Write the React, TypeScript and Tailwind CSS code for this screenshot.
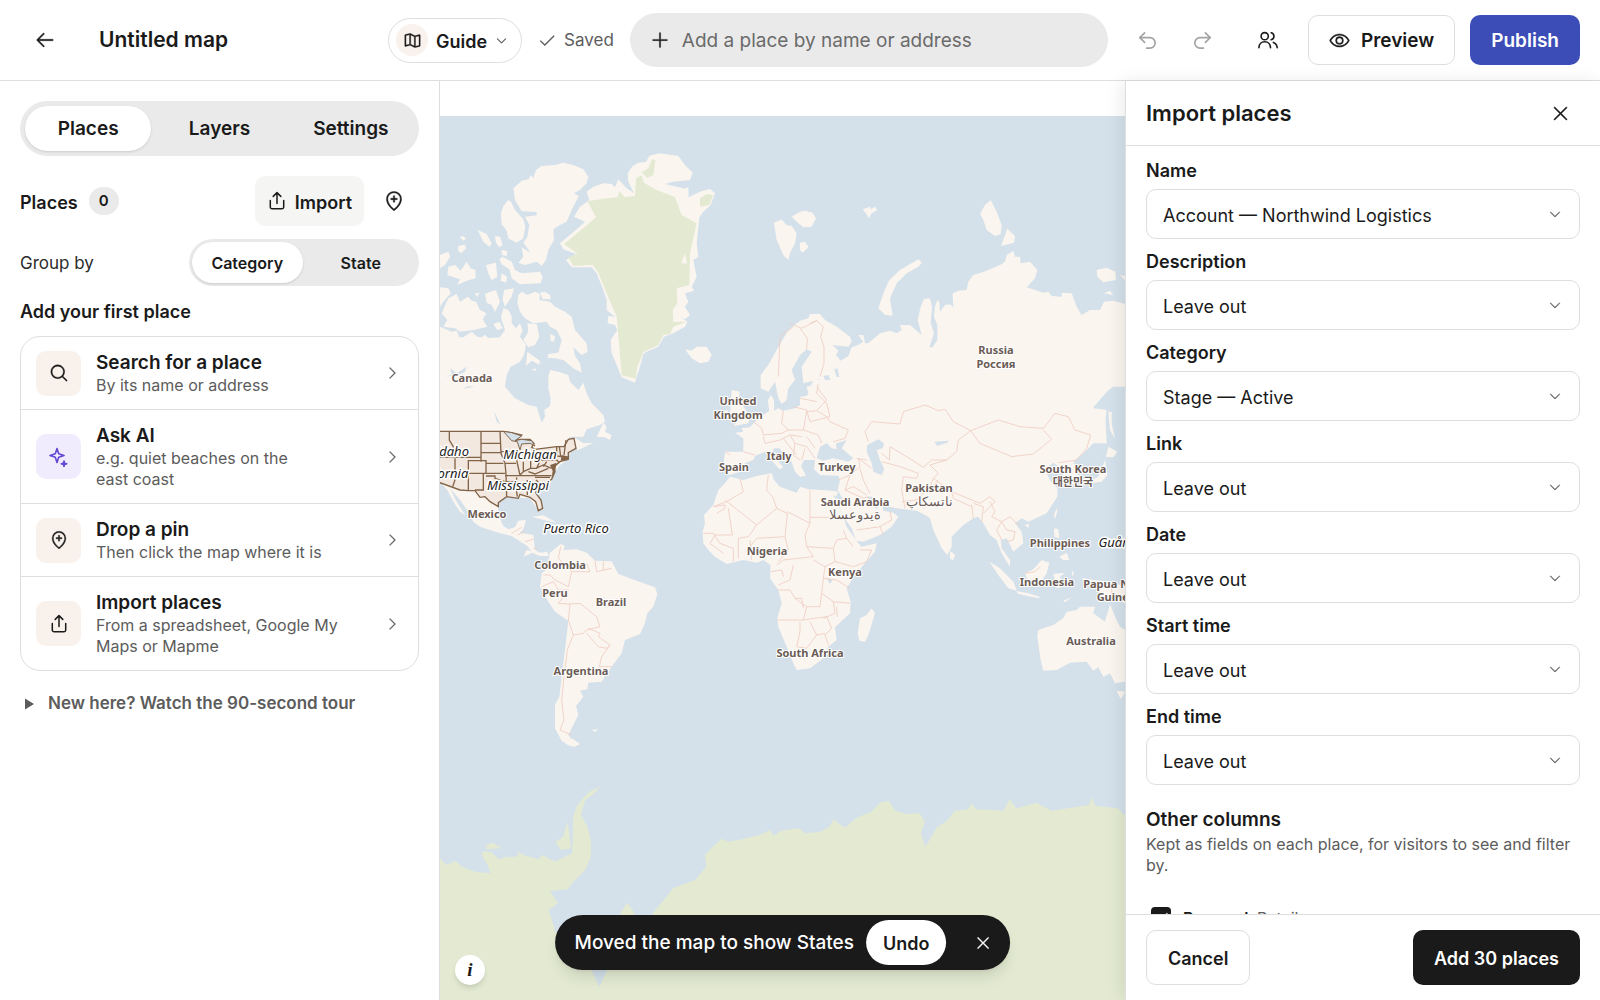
import { useState, type ReactNode } from "react";
import clsx from "clsx";
import { Redo2, Undo2 } from "lucide-react";
import { IconContext } from "react-icons";
import {
  PiArrowLeft,
  PiCaretDown,
  PiCaretRight,
  PiCheck,
  PiEye,
  PiMagnifyingGlass,
  PiMapPinPlus,
  PiMapTrifold,
  PiPlus,
  PiX,
} from "react-icons/pi";

const fields = [
  { name: "Name", value: "Account — Northwind Logistics" },
  { name: "Description", value: "Leave out" },
  { name: "Category", value: "Stage — Active" },
  { name: "Link", value: "Leave out" },
  { name: "Date", value: "Leave out" },
  { name: "Start time", value: "Leave out" },
  { name: "End time", value: "Leave out" },
];

const countries = [
  { x: 472, y: 382, text: "Canada" },
  { x: 996, y: 354, text: "Russia" },
  { x: 996, y: 368, text: "Россия" },
  { x: 738, y: 405, text: "United" },
  { x: 738, y: 419, text: "Kingdom" },
  { x: 779, y: 460, text: "Italy" },
  { x: 734, y: 471, text: "Spain" },
  { x: 837, y: 471, text: "Turkey" },
  { x: 929, y: 492, text: "Pakistan" },
  { x: 855, y: 506, text: "Saudi Arabia" },
  { x: 1073, y: 473, text: "South Korea" },
  { x: 1073, y: 486, text: "대한민국" },
  { x: 1060, y: 547, text: "Philippines" },
  { x: 1047, y: 586, text: "Indonesia" },
  { x: 1114, y: 588, text: "Papua New" },
  { x: 1116, y: 601, text: "Guinea" },
  { x: 1091, y: 645, text: "Australia" },
  { x: 845, y: 576, text: "Kenya" },
  { x: 767, y: 555, text: "Nigeria" },
  { x: 810, y: 657, text: "South Africa" },
  { x: 560, y: 569, text: "Colombia" },
  { x: 555, y: 597, text: "Peru" },
  { x: 611, y: 606, text: "Brazil" },
  { x: 581, y: 675, text: "Argentina" },
  { x: 487, y: 518, text: "Mexico" },
];

const states = [
  { x: 452, y: 456, text: "Idaho" },
  { x: 440, y: 478, text: "California" },
  { x: 530, y: 459, text: "Michigan" },
  { x: 518, y: 490, text: "Mississippi" },
  { x: 576, y: 533, text: "Puerto Rico" },
  { x: 1116, y: 547, text: "Guåm" },
];

function WorldMap() {
  return (
    <svg
      viewBox="440 81 685 919"
      preserveAspectRatio="xMidYMid slice"
      className="absolute inset-0 h-full w-full"
      role="img"
      aria-label="World map"
    >
      <rect x="-400" y="116" width="2400" height="1200" fill="#d4e1ea" />

      {/* Arctic Canada and Greenland */}
      <g transform="translate(440 110) scale(0.33333)" fill="#fbf5f0">
        <path d="M220 235L245 212 266 208 272 195 280 205 288 180 304 168 345 165 370 158 400 165 430 178 445 200 440 220 420 240 402 250 416 258 395 300 380 335 360 345 340 358 342 390 325 420 318 450 305 468 290 455 255 465 235 458 250 440 245 412 272 428 250 398 262 380 268 345 255 320 290 316 290 306 245 304 225 270Z" />
        <path d="M205 270L213 275 225 300 250 328 256 350 250 385 230 398 205 385 200 362 185 342 183 310 190 288Z" />
        <path d="M113 360L140 372 155 400 148 411 130 395Z M165 378L180 380 188 405 178 412 168 398Z M60 382L68 378 78 385 70 392Z M55 408L75 404 78 415 64 430 54 422Z M0 435L25 425 30 440 15 465 0 475Z" />
        <path d="M25 470L45 465 62 482 80 455 92 475 106 480 107 505 80 512 52 525 60 508 22 495Z M138 465L168 458 172 500 155 510 145 490Z M185 490L201 500 198 518 182 512Z M185 420L202 424 200 438 186 434Z" />
        <path d="M178 447L188 441 215 455 225 480 245 490 300 485 308 500 302 520 240 523 215 505 208 478 185 463Z" />
        <path d="M0 532L25 535 32 550 10 575 0 590Z M5 610L25 565 50 552 60 575 84 560 95 572 108 575 120 600 140 610 128 628 142 650 100 660 60 665 45 655 10 650 22 630Z M105 550L118 548 112 562Z" />
        <path d="M135 552L150 545 168 541 180 575 165 605 155 585 140 578Z M192 540L222 535 215 560 195 590 188 570Z M300 548L315 545 330 555 332 568 308 568Z" />
        <path d="M235 555L245 545 262 555 285 545 300 552 298 570 330 575 345 590 375 605 395 620 405 660 440 700 443 725 425 735 400 712 405 738 420 760 425 788 400 775 370 750 345 745 322 743 325 732 355 728 365 690 350 660 330 650 320 635 280 640 255 625 240 605 232 580Z" />
        <path d="M262 640L290 642 298 680 285 705 265 712 250 690 265 665Z M262 725L275 735 300 752 298 764 275 752 258 768Z M330 673L345 678 342 695 332 692Z M160 642L178 635 188 655 172 660Z M275 778L290 775 285 784Z" />
        <path d="M0 650L35 665 50 662 58 682 70 682 95 665 112 680 125 682 135 674 145 684 180 682 195 660 183 622 190 595 205 600 215 618 215 640 228 655 240 640 248 662 240 680 258 705 252 735 240 755 212 770 200 795 195 830 225 865 265 885 290 890 305 938 315 920 313 900 330 888 332 865 325 835 325 800 330 780 355 785 385 795 390 815 415 840 430 818 440 850 455 880 490 915 495 935 480 945 440 958 430 980 0 980Z" />
        <path d="M402 320L420 290 448 270 440 245 460 230 490 220 515 222 525 232 535 208 560 235 582 250 565 215 563 190 578 168 595 158 618 156 628 137 660 130 715 138 735 165 758 188 750 210 700 215 675 222 735 236 745 230 746 262 780 245 810 237 825 250 812 285 790 305 778 322 770 400 775 440 760 450 770 500 755 530 763 542 735 550 745 575 735 590 750 615 735 628 720 620 742 635 735 650 700 670 672 680 655 710 620 725 610 732 600 770 590 800 585 818 545 802 530 765 515 730 512 690 532 660 525 645 503 640 505 618 525 620 500 600 500 570 490 540 470 490 455 472 395 472 378 450 408 432 370 418 360 400 410 358 435 335Z" />
        <path
          d="M442 274L500 265 533 262 538 243 555 262 585 257 588 205 605 196 612 218 650 240 705 262 725 315 770 340 750 430 748 525 710 535 712 580 698 600 700 636 740 635 700 650 690 672 670 675 655 705 610 726 592 770 587 806 545 796 537 700 530 620 500 550 475 488 458 465 400 468 385 442 412 431 372 402 435 350 468 322Z M605 187L625 175 636 148 646 150 640 195 622 204Z M780 265L800 252 820 255 808 285 780 290Z"
          fill="#e3ead1"
        />
        <path d="M724 458L735 430 741 462Z M735 718L755 722 770 710 800 710 815 735 805 755 780 760 755 745Z" />
        <path d="M1002 338L1025 328 1040 345 1055 348 1070 370 1065 400 1050 430 1045 450 1030 435 1010 390Z M1055 320L1080 305 1095 302 1118 308 1128 325 1115 350 1090 352 1075 340Z" />
        <path
          d="M15 800L35 795 32 775 50 790 80 770 75 785 55 795Z M68 838L85 828 103 830 85 833Z M162 903L182 945 170 935Z"
          fill="#d4e1ea"
        />
      </g>

      {/* Northern Eurasia */}
      <g transform="translate(800 110) scale(0.33333)" fill="#fbf5f0">
        <path d="M-118 795L-95 765 -70 720 -35 660 0 632 25 625 30 612 60 612 75 630 110 650 150 680 155 695 145 710 97 705 115 722 108 735 122 752 145 738 155 712 175 704 190 695 175 675 190 675 195 700 205 700 240 670 270 662 290 670 305 660 300 645 330 645 365 675 353 630 362 590 372 567 390 565 396 590 392 640 402 670 388 712 398 712 412 690 412 645 402 620 405 590 412 570 418 575 420 605 435 585 450 583 460 592 458 550 475 542 500 540 505 515 520 495 550 486 600 465 615 455 620 435 640 423 645 440 660 440 662 460 690 455 712 480 705 505 680 532 705 540 730 548 745 545 755 558 785 560 785 548 815 550 830 590 845 615 870 600 900 600 912 575 940 572 976 582 976 830 940 830 920 845 878 895 915 905 920 1000 0 1000 0 860 20 860 25 850 20 830 55 822 60 808 10 820 5 770 35 725 20 718 0 735 -25 780 -15 810 -35 835 -40 870 -55 882 -65 865 -75 815 -95 845 -118 835Z" />
        <path d="M572 270L590 305 605 345 602 372 585 378 560 360 550 330 540 312 555 285Z M622 356L645 378 642 398 603 408Z M355 448L366 458 355 470 320 490 290 520 270 565 278 617 255 615 235 595 252 545 268 510 300 480Z" />
        <path d="M890 480L920 473 946 485 948 510 910 517 892 500Z M960 495L976 498 976 512Z M912 550L930 542 940 556Z M188 298L210 290 212 298 225 290 232 300 215 310 207 325 198 310Z M0 398L15 395 25 412 8 428 0 420Z" />
        <path d="M635 933L660 912 678 882 681 895 665 922Z M70 798L85 795 92 812 80 820Z M103 778L112 775 118 800 110 802Z" fill="#d4e1ea" />
      </g>

      {/* Southern Eurasia, Africa and Oceania */}
      <g transform="translate(700 380) scale(0.33333)" fill="#fbf5f0">
        <path d="M340 0L330 25 325 45 305 52 300 75 285 85 250 92 235 85 222 92 222 60 212 45 203 62 208 92 190 105 165 125 150 142 125 145 130 155 105 158 130 175 130 215 75 215 72 240 75 275 90 285 120 275 135 250 160 240 165 228 195 215 210 235 238 268 250 262 215 222 222 205 238 205 255 225 275 245 285 275 300 290 318 287 303 258 312 240 345 240 342 268 360 285 415 287 420 300 413 330 430 360 408 355 430 410 455 445 468 482 490 485 540 465 575 440 595 410 580 398 550 392 545 372 528 386 500 350 515 350 545 375 590 385 650 392 670 402 690 415 700 450 725 505 742 525 755 500 755 470 790 435 820 415 835 410 850 430 870 465 890 480 905 520 930 560 930 540 905 505 902 480 920 475 940 515 970 490 965 455 945 430 965 415 985 425 1040 400 1072 350 1072 325 1050 300 1035 270 1060 248 1080 262 1095 305 1128 315 1138 290 1120 245 1150 220 1190 180 1215 130 1220 90 1180 85 1180 0Z" />
        <path d="M90 290L130 300 170 288 215 280 222 300 240 320 290 338 300 320 325 328 400 332 415 335 408 350 400 345 428 405 440 440 475 490 485 500 530 490 525 515 490 555 455 600 440 625 452 665 450 700 405 742 410 780 385 800 370 835 330 865 290 870 280 850 260 800 235 740 232 715 245 670 235 630 210 595 212 555 190 540 170 548 130 540 80 552 45 530 25 510 10 490 8 455 15 430 12 405 40 375 55 330 75 310Z" />
        <path d="M515 685L525 700 505 765 495 785 478 782 473 760 480 715 500 705Z M750 512L765 525 760 540 750 536Z M868 545L900 565 940 605 950 632 925 625 895 585Z M948 633L985 640 1020 650 1015 655 955 642Z M975 580L1000 568 1025 540 1048 548 1040 580 1020 610 985 605Z M1060 582L1095 578 1080 590 1090 620 1070 625 1065 600Z M1115 570L1122 580 1118 590Z M1090 662L1115 652 1095 667Z" />
        <path d="M1062 405L1070 385 1072 395 1065 417Z M973 435L988 432 985 443Z M1062 445L1075 448 1078 475 1063 470Z M1078 530L1100 518 1108 540 1090 540Z M1225 95L1235 95 1235 130 1245 178 1230 150Z M1225 200L1252 215 1240 232 1218 230Z M1215 240L1222 285 1205 305 1150 312 1195 290Z M1145 593L1180 600 1230 605 1276 620 1276 670 1250 660 1210 650 1190 620 1155 605Z" />
        <path d="M1012 770L1015 750 1060 735 1090 715 1100 695 1130 690 1140 680 1185 680 1180 700 1215 725 1230 672 1245 710 1260 740 1276 750 1276 905 1245 910 1230 880 1210 890 1195 862 1180 872 1160 845 1110 848 1070 870 1030 872 1022 840Z M1250 932L1276 935 1262 957Z M95 30L120 35 115 55 150 110 145 130 100 138 110 125 90 110Z M60 95L85 90 80 115 62 118Z" />
        <path
          d="M350 235L360 200 380 190 395 205 410 208 408 190 440 180 425 205 460 235 445 245 400 235 370 242Z M502 195L535 178 552 190 548 205 530 210 540 240 553 268 545 285 520 275 515 250 500 215Z M703 185L745 182 745 187 712 198Z M380 595L398 600 390 612Z"
          fill="#d4e1ea"
        />
        <g fill="none" stroke="#eecdc0" strokeWidth="2.5">
          <path d="M505 185L495 155 515 125 600 132 610 95 675 75 715 92 735 88 760 125 812 152 895 120 960 140 1030 145 1065 100 1105 110 1125 150 1172 165 1160 205 1130 240 1075 248" />
          <path d="M812 152L840 190 935 230 1000 222 1055 178 1030 150 M812 152L775 180 770 215 740 240 695 240 670 262 620 230 570 200 568 240 545 220 M740 240L690 255 715 280 700 295 755 335 840 370 870 350 885 365 850 400 M545 245L600 260 655 280 650 295 610 290 605 330 615 385 M605 365L650 360 690 320 700 295" />
          <path d="M690 330L715 300 M755 335L760 355 815 380 M820 370L850 380 845 425 M815 375L820 415 M870 365L885 395 875 410 905 425 890 450 905 480 M905 425L930 410 960 440 M905 425L920 450 945 455 940 480 920 485 M975 580L1005 575 1020 560 M1235 605V650" />
          <path d="M450 285L480 260 475 235 515 265 M415 300L450 285 435 330 460 320 500 345 M480 265L490 300 510 340 M435 330L490 355 505 350 M470 450L540 440 575 420 570 395 M540 440L550 465 M470 235L500 240" />
          <path d="M250 92L245 130 265 150 310 150 320 95 M320 95L350 92 380 60 350 20 M350 92L380 110 390 125 445 150 435 175 400 185 M310 150L355 165 365 190 M265 150L245 160 190 165 185 145 160 125 M190 170L195 190 240 180 270 165 305 170 M270 165L285 190 320 200 345 235 M285 190L280 225 300 240 M320 170L345 205 M300 55L350 65 M250 175L265 195 290 225 M75 215L90 225M130 215L165 225M315 205L305 240" />
          <path d="M120 295L130 335 80 365 40 380 M75 360L170 435 145 470 115 475 M85 385L97 465 45 465 M205 285L200 330 218 350 230 385 170 435 M230 385L262 400 255 470 170 475 150 500 M330 330V430 L262 395 M330 412H425 M330 430L315 465 320 500 340 530 250 540 230 555 M255 470L265 510 235 545 M10 460H40L60 490 100 505 100 545 M40 380L75 375 75 385 50 400" />
          <path d="M115 475L115 535M150 480L155 540M320 500L400 505 410 480 440 475 460 500 M400 505L405 545 375 560 340 540 M440 475L430 450 M405 545L460 560 500 545 515 510 480 510 M375 560L370 595 410 600 450 625 M370 595L365 640 400 665 450 670 M365 640L360 680 320 680 310 720 232 720" />
          <path d="M235 630H270L285 655 305 655 310 685 M280 555L270 600 235 615 M212 575L245 570 250 590 M310 720L380 710 395 745 375 765 385 795 M300 725V755L290 800 320 805 350 765 330 725 M350 765L375 760 M400 665L405 700 370 715 M410 680L412 710 M285 655L320 680 M45 465L30 490 70 520" />
        </g>
      </g>
      <g transform="translate(800 110) scale(0.33333)" fill="none" stroke="#eecdc0" strokeWidth="2.5">
        <path d="M-20 650L-60 680 -65 800 M0 655L22 685 20 718 M30 640L50 632 70 650 62 680 72 710 72 760 60 800 M55 822L50 850 80 880 90 920 30 935 20 900 -20 890 M-30 640L5 655 50 632" />
      </g>

      {/* the Americas */}
      <g transform="translate(440 400) scale(0.33333)" fill="#fbf5f0">
        <path d="M0 80H442L440 90 410 98 385 115 402 112 430 130 460 128 415 150 405 145 385 165 385 178 360 195 345 215 335 240 290 262 285 280 300 300 308 325 295 332 270 295 200 292 175 310 175 345 190 378 205 388 225 382 235 362 258 360 250 388 240 398 280 405 285 450 300 458 322 455 326 468 300 468 280 460 262 438 215 408 180 400 120 380 100 365 85 335 60 300 30 265 50 305 75 345 60 335 40 305 22 270 0 245Z" />
        <path d="M330 458L362 432 375 438 370 450 410 448 440 458 465 482 515 484 535 522 590 542 645 562 652 582 640 620 622 640 615 670 600 702 555 720 545 760 515 800 495 828 485 845 445 848 442 868 420 872 430 890 408 918 415 945 395 985 385 1005 400 1025 420 1032 400 1040 365 1022 345 985 345 915 358 890 365 830 375 750 385 662 345 635 325 605 300 560 305 520 330 500 325 480Z M455 990L475 988 465 996Z M275 350L310 346 350 368 320 362Z M355 372L385 380 360 388Z M470 110L490 68 500 80 495 95 515 105 510 120 495 112Z M250 470L285 455 260 450Z" />
        <g fill="none" stroke="#eecdc0" strokeWidth="2.5">
          <path d="M362 440L355 475 395 515 385 560 345 540 330 525 310 525 M305 560L340 545 355 570 385 570 355 610 385 612 420 610 470 650 480 680 440 690 430 700 400 705 385 660 390 612" />
          <path d="M400 705L382 750 372 830 365 900 372 960 360 990 395 1005 M445 685L480 700 475 710 510 735 500 745 475 740 440 700 M510 735L485 770 478 800 515 800 M440 490L450 515 395 515 M465 482L470 515 515 505 M490 484V510" />
          <path d="M215 400L245 382 M232 405L255 395 M255 425L280 418 M280 445H290" />
        </g>
        <path
          d="M-20 94H190L215 98 245 105 222 122 240 118 270 118 282 130 275 142 285 148 350 140 372 140 385 118 402 115 408 145 385 158 385 178 360 185 342 200 345 215 335 238 315 252 288 268 288 280 303 300 308 325 295 332 287 305 270 292 240 283 235 295 200 290 175 308 175 320 150 305 135 290 120 292 105 272 85 272 60 270 0 248 -20 245Z"
          fill="#f3e8df"
          stroke="#826449"
          strokeWidth="4"
        />
        <path
          d="M28 94V120L40 140V170M0 172H123M123 94V185M123 130H180M123 158H183M45 175V240L38 260M85 180V272M85 182H138V220M85 220H195M130 220V270H105M138 190H190M180 94L183 160 195 190 198 222 200 290M183 155H225L232 190 240 225M195 190H228M250 185V215L240 225M272 183V205L250 215M300 182L290 205 272 205M195 227H335M288 205L310 195 335 205M230 232L228 260 232 290M262 240V285M288 240L310 262M285 232H330M350 140V168M358 140L362 168M378 120L372 165M300 180H350L358 188M320 185L310 200M195 245H232M138 228H165V235L195 245M350 168L385 172M240 270L270 268 288 270M265 215L285 222 325 205"
          fill="none"
          stroke="#826449"
          strokeWidth="4"
        />
        <path d="M330 195L350 188 345 215 335 235 338 212Z M365 165L388 170 384 180 362 182Z" fill="#826449" />
        <path
          d="M190 94L215 98 245 108 225 122 245 118 275 122 285 138 270 130 245 132 240 150 232 125 215 122Z"
          fill="#d4e1ea"
          stroke="#826449"
          strokeWidth="3"
        />
      </g>

      {/* Antarctica */}
      <g transform="translate(440 740) scale(0.44 0.33333)" fill="#e3ead1">
        <path d="M0 355L15 375 35 362 50 380 80 395 115 400 108 375 95 345 98 333 115 335 135 358 150 350 175 350 180 335 190 345 225 358 232 345 262 365 300 340 302 290 302 235 310 200 325 175 340 155 362 140 355 155 330 180 320 225 335 260 343 300 343 350 330 390 300 430 290 448 250 452 268 490 247 510 262 575 330 650 362 740V800H0Z" />
        <path d="M362 740L380 690 410 650 410 520 425 488 440 515 440 600 490 510 530 445 580 420 605 380 602 345 620 320 640 296 655 305 690 297 725 285 750 270 758 288 775 272 815 265 830 280 865 275 885 260 895 238 910 255 922 262 945 235 980 215 1000 188 1020 182 1035 212 1060 222 1090 220 1102 245 1093 280 1103 320 1130 260 1150 245 1170 212 1200 208 1208 190 1218 208 1280 212 1295 178 1310 205 1355 188 1390 212 1475 195 1480 170 1490 198 1540 205 1555 225 1800 240V800H360Z" />
        <path d="M105 315L120 308 140 325 105 328Z M290 245L298 325 275 330 262 305 280 290Z" />
        <path d="M275 0L295 8 300 -5 318 12 305 20 290 15Z" fill="#fbf5f0" />
      </g>

      <g
        textAnchor="middle"
        stroke="#ffffff"
        strokeWidth="2"
        strokeLinejoin="round"
        style={{ paintOrder: "stroke" }}
        className="font-['Noto_Sans','Noto_Sans_CJK_KR',sans-serif]"
      >
        {countries.map((c) => (
          <text key={c.text} x={c.x} y={c.y} fill="#6b5c56" className="text-[11px] font-bold">
            {c.text}
          </text>
        ))}
        <text x="929" y="506" fill="#6b5c56" className="text-[13px] [direction:ltr] [unicode-bidi:bidi-override]">
          پاکستان
        </text>
        <text x="855" y="519" fill="#6b5c56" className="text-[13px] [direction:ltr] [unicode-bidi:bidi-override]">
          السعودية
        </text>
        {states.map((s) => (
          <text key={s.text} x={s.x} y={s.y} fill="#222222" strokeWidth="3" className="text-[13px] italic">
            {s.text}
          </text>
        ))}
      </g>
    </svg>
  );
}

function Sparkles() {
  return (
    <svg viewBox="0 0 20 20" className="size-5" fill="none" stroke="currentColor" strokeWidth="1.6" strokeLinejoin="round">
      <path d="M8 1.5L9.7 6.8 15 8.5 9.7 10.2 8 15.5 6.3 10.2 1 8.5 6.3 6.8Z" />
      <path d="M15 13.5L15.9 15.9 18.3 16.8 15.9 17.7 15 20 14.1 17.7 11.7 16.8 14.1 15.9Z" fill="currentColor" strokeWidth="1" />
    </svg>
  );
}

function Upload() {
  return (
    <svg
      viewBox="0 0 20 20"
      className="size-5"
      fill="none"
      stroke="currentColor"
      strokeWidth="1.5"
      strokeLinecap="round"
      strokeLinejoin="round"
    >
      <path d="M3.3 9.5V16A1.8 1.8 0 0 0 5.1 17.8H14.9A1.8 1.8 0 0 0 16.7 16V9.5" />
      <path d="M10 12.5V1.8M6.2 5.4L10 1.6 13.8 5.4" />
    </svg>
  );
}

function People() {
  return (
    <svg viewBox="0 0 22 20" className="h-5 w-[22px]" fill="none" stroke="currentColor" strokeWidth="1.6" strokeLinecap="round">
      <circle cx="7.7" cy="6.2" r="3.6" />
      <path d="M1.9 17.7C2 14 4.5 11.8 7.7 11.8S13.4 14 13.5 17.7" />
      <path d="M14.2 2.7A3.6 3.6 0 0 1 14.2 9.7M16.4 12.4C18.7 13.3 20 15 20.2 17.7" />
    </svg>
  );
}

function Action({
  icon,
  title,
  text,
  ai,
}: {
  icon: ReactNode;
  title: string;
  text: string;
  ai?: boolean;
}) {
  return (
    <button className="flex w-full items-center gap-[15px] py-[13px] pl-[15px] pr-[18px] text-left">
      <span
        className={clsx(
          "flex size-[45px] shrink-0 items-center justify-center rounded-[10px] text-[20px]",
          ai ? "bg-[#f0ecfd] text-[#6246d5]" : "bg-[#f9f1ec]"
        )}
      >
        {icon}
      </span>
      <span className="flex-1">
        <span className="block text-[19px] font-semibold leading-[25px]">{title}</span>
        <span className="block max-w-[250px] text-pretty text-[16px] leading-[21px] text-[#5c5c5c]">{text}</span>
      </span>
      <PiCaretRight className="size-4 shrink-0 text-[#5c5c5c]" />
    </button>
  );
}

function Header() {
  return (
    <header className="flex h-[81px] shrink-0 items-center border-b border-[#dedede] px-5">
      <button aria-label="Back" className="flex size-[50px] items-center justify-center text-[22px]">
        <PiArrowLeft />
      </button>
      <h1 className="ml-[29px] w-[289px] text-[21px] font-semibold">Untitled map</h1>
      <button className="flex h-[45px] items-center gap-2 rounded-full border border-[#dedede] pl-[7px] pr-[13px] text-[18px] font-semibold">
        <span className="flex size-8 items-center justify-center rounded-full bg-[#f9f1ec] text-[19px]">
          <PiMapTrifold />
        </span>
        <span className="pt-[2px]">Guide</span>
        <PiCaretDown className="size-[13px] text-[#5c5c5c]" />
      </button>
      <span className="ml-4 flex items-center gap-2 text-[17px] text-[#5c5c5c]">
        <PiCheck className="size-[18px]" />
        <span className="pt-[2px]">Saved</span>
      </span>
      <label className="ml-4 flex h-[54px] min-w-0 flex-1 items-center gap-3 rounded-full bg-[#eaeaea] px-5">
        <PiPlus className="size-5 shrink-0" />
        <input
          aria-label="Add a place"
          placeholder="Add a place by name or address"
          className="min-w-0 flex-1 bg-transparent pt-[2px] text-[19px] outline-none placeholder:text-[#6b6b6b]"
        />
      </label>
      <div className="ml-[15px] flex items-center gap-[5px] text-[#a3a3a3]">
        <button aria-label="Undo" className="flex size-[50px] items-center justify-center">
          <Undo2 size={23} strokeWidth={1.7} />
        </button>
        <button aria-label="Redo" className="flex size-[50px] items-center justify-center">
          <Redo2 size={23} strokeWidth={1.7} />
        </button>
      </div>
      <button aria-label="Share" className="ml-[15px] flex size-[50px] items-center justify-center">
        <People />
      </button>
      <button className="ml-[15px] flex h-[50px] items-center gap-[11px] rounded-[10px] border border-[#dedede] px-5 text-[19px] font-semibold">
        <PiEye className="size-[21px]" />
        <span className="pt-[2px]">Preview</span>
      </button>
      <button className="ml-[15px] h-[50px] rounded-[10px] bg-[#3c4db7] px-[21px] pt-[2px] text-[19px] font-semibold text-white">
        Publish
      </button>
    </header>
  );
}

function Sidebar() {
  const [tab, setTab] = useState("Places");
  const [group, setGroup] = useState("Category");

  return (
    <aside className="w-[440px] shrink-0 border-r border-[#dedede] px-5 pt-5">
      <div className="flex gap-[5px] rounded-full bg-[#eaeaea] p-[5px]">
        {["Places", "Layers", "Settings"].map((t) => (
          <button
            key={t}
            onClick={() => setTab(t)}
            className={clsx(
              "h-[45px] flex-1 rounded-full pt-[2px] text-[19px] font-semibold",
              tab === t && "bg-white shadow-sm"
            )}
          >
            {t}
          </button>
        ))}
      </div>

      <div className="mt-5 flex items-center">
        <h2 className="pt-[2px] text-[18px] font-semibold">Places</h2>
        <span className="ml-[11px] flex h-7 w-[30px] items-center justify-center rounded-full bg-[#eaeaea] text-[15px] font-semibold">
          0
        </span>
        <button className="ml-auto flex h-[50px] items-center gap-2 rounded-[10px] bg-[#f5f5f4] px-3 text-[18px] font-semibold">
          <Upload />
          <span className="pt-[2px]">Import</span>
        </button>
        <button aria-label="Drop a pin" className="ml-[5px] flex size-[50px] items-center justify-center text-[22px]">
          <PiMapPinPlus />
        </button>
      </div>

      <div className="mt-[13px] flex items-center justify-between">
        <span className="pt-[2px] text-[17px] text-[#2b2b2b]">Group by</span>
        <div className="flex w-[230px] gap-[3px] rounded-full bg-[#eaeaea] p-[3px]">
          {["Category", "State"].map((g) => (
            <button
              key={g}
              onClick={() => setGroup(g)}
              className={clsx("h-[41px] flex-1 rounded-full text-[16px] font-semibold", group === g && "bg-white shadow-sm")}
            >
              {g}
            </button>
          ))}
        </div>
      </div>

      <h2 className="mt-3 text-[18px] font-semibold leading-7">Add your first place</h2>
      <div className="mt-[10px] divide-y divide-[#dedede] rounded-[20px] border border-[#dedede]">
        <Action icon={<PiMagnifyingGlass />} title="Search for a place" text="By its name or address" />
        <Action ai icon={<Sparkles />} title="Ask AI" text="e.g. quiet beaches on the east coast" />
        <Action icon={<PiMapPinPlus />} title="Drop a pin" text="Then click the map where it is" />
        <Action icon={<Upload />} title="Import places" text="From a spreadsheet, Google My Maps or Mapme" />
      </div>

      <button className="mt-[19px] flex items-center gap-[14px] pl-[5px] text-[17px] font-semibold leading-[27px] text-[#5c5c5c]">
        <svg viewBox="0 0 10 12" className="h-3 w-[9px]" fill="currentColor">
          <path d="M0 0L10 6 0 12Z" />
        </svg>
        New here? Watch the 90-second tour
      </button>
    </aside>
  );
}

function ImportPanel() {
  return (
    <section className="relative flex w-[475px] shrink-0 flex-col border-l border-[#dedede] bg-white shadow-[-4px_0_16px_rgba(0,0,0,0.08)]">
      <div className="flex h-[65px] shrink-0 items-center justify-between border-b border-[#dedede] pl-5 pr-[15px]">
        <h2 className="text-[22px] font-semibold">Import places</h2>
        <button aria-label="Close" className="flex size-[50px] items-center justify-center text-[21px]">
          <PiX />
        </button>
      </div>

      <div className="min-h-0 flex-1 overflow-hidden px-5 pt-[13px]">
        <div className="flex flex-col gap-[11px]">
          {fields.map((f) => (
            <label key={f.name} className="relative block">
              <span className="block text-[18px] font-semibold leading-6">{f.name}</span>
              <select className="mt-[6px] block h-[50px] w-full appearance-none rounded-[10px] border border-[#dedede] bg-white px-4 pt-[2px] text-[18px]">
                <option>{f.value}</option>
              </select>
              <PiCaretDown className="pointer-events-none absolute bottom-[18px] right-[18px] size-[14px] text-[#5c5c5c]" />
            </label>
          ))}
        </div>

        <h3 className="mt-[23px] text-[19px] font-semibold leading-6">Other columns</h3>
        <p className="mt-[2px] text-[16px] leading-[21px] text-[#5c5c5c]">
          Kept as fields on each place, for visitors to see and filter by.
        </p>
        <label className="mt-7 flex items-center gap-3 pl-[5px]">
          <input type="checkbox" defaultChecked className="peer sr-only" />
          <span className="flex size-5 items-center justify-center rounded-sm bg-[#1a1a1a] text-white">
            <PiCheck className="size-4" />
          </span>
          <span className="pt-[2px] text-[16px] leading-6">
            <b className="font-semibold">Renewal</b> <span className="ml-1 text-[#5c5c5c]">Retail</span>
          </span>
        </label>
      </div>

      <div className="flex shrink-0 justify-between border-t border-[#dedede] px-5 py-[15px]">
        <button className="h-[55px] rounded-[10px] border border-[#dedede] px-[21px] pt-[2px] text-[18px] font-semibold">
          Cancel
        </button>
        <button className="h-[55px] rounded-[10px] bg-[#1a1a1a] px-[21px] pt-[2px] text-[18px] font-semibold text-white">
          Add 30 places
        </button>
      </div>
    </section>
  );
}

export default function App() {
  return (
    // a little extra stroke so the outline icons hold up next to semibold text
    <IconContext.Provider value={{ attr: { strokeWidth: 5 } }}>
      <div className="flex h-screen flex-col overflow-hidden bg-white font-['Inter',sans-serif] text-[#1a1a1a]">
        <Header />
        <div className="flex min-h-0 flex-1">
          <Sidebar />
          <main className="relative min-w-0 flex-1 overflow-hidden">
            <WorldMap />
            <button
              aria-label="Attribution"
              className="absolute bottom-[15px] left-[15px] flex size-[30px] items-center justify-center rounded-full bg-white font-['Liberation_Serif',serif] text-[19px] font-bold italic shadow-md"
            >
              i
            </button>
            <div className="absolute bottom-[30px] left-1/2 flex h-[55px] -translate-x-1/2 items-center whitespace-nowrap rounded-full bg-[#1a1a1a] pl-5 pr-[5px] text-[19px] font-medium text-white shadow-lg">
              <span className="pt-[2px]">Moved the map to show States</span>
              <button className="ml-3 h-[45px] rounded-full bg-white px-[17px] pt-[2px] text-[18px] font-semibold text-[#1a1a1a]">
                Undo
              </button>
              <button aria-label="Dismiss" className="ml-[14px] flex size-[45px] items-center justify-center text-[18px]">
                <PiX />
              </button>
            </div>
          </main>
          <ImportPanel />
        </div>
      </div>
    </IconContext.Provider>
  );
}
